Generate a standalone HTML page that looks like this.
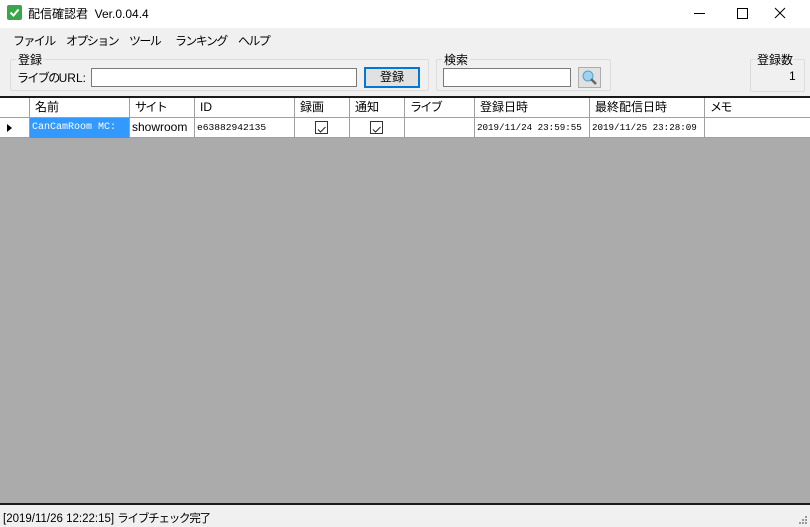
<!DOCTYPE html>
<html><head><meta charset="utf-8"><style>
*{box-sizing:border-box;margin:0;padding:0}
body{width:810px;height:527px;overflow:hidden;background:#f0f0f0;font-family:"Liberation Sans","Noto Sans CJK JP",sans-serif;font-size:12px;color:#000;position:relative}
.a{position:absolute;white-space:nowrap}
.k{letter-spacing:-1.6px}
.grp{position:absolute;border:1px solid #dcdcdc;border-radius:2px}
.lg{position:absolute;background:#f0f0f0;padding:0 2px;top:-9px;left:5px;font-size:12px}
.inp{position:absolute;background:#fff;border:1px solid #7a7a7a}
.c{position:absolute;top:0;height:20px;border-right:1px solid #a0a0a0;line-height:19px;padding-left:5px;white-space:nowrap;overflow:hidden}
.cb{position:absolute;width:13px;height:13px;border:1px solid #333;background:#fff;top:3px}
.m{font-family:"Liberation Mono",monospace;font-size:9.2px}
</style></head><body>
<div class="a" style="left:0;top:0;width:810px;height:28px;background:#fff"></div>
<div class="a" style="left:7px;top:5px;width:15px;height:15px;background:#3aa64a;border-radius:2px"><svg width="15" height="15"><path d="M3.5 7.5 L6.5 10.5 L11.5 4.5" stroke="#fff" stroke-width="2" fill="none"/></svg></div>
<div class="a" style="left:28px;top:5px;font-size:12px">配信確認君&nbsp; Ver.0.04.4</div>
<svg class="a" style="left:690px;top:6px" width="110" height="14"><path d="M4 7.5H15" stroke="#000"/><path d="M47.5 2.5h10v10h-10z" stroke="#000" fill="none"/><path d="M85 2L95 12M95 2L85 12" stroke="#000"/></svg>
<div class="a k" style="left:13px;top:32px">ファイル</div>
<div class="a k" style="left:66px;top:32px">オプション</div>
<div class="a k" style="left:129px;top:32px">ツール</div>
<div class="a k" style="left:175px;top:32px">ランキング</div>
<div class="a k" style="left:238px;top:32px">ヘルプ</div>
<div class="grp" style="left:10px;top:59px;width:419px;height:32px"><span class="lg">登録</span></div>
<div class="a" style="left:17px;top:69px"><span class="k">ライブの</span>URL:</div>
<div class="inp" style="left:91px;top:68px;width:266px;height:19px"></div>
<div class="a" style="left:364px;top:67px;width:56px;height:21px;background:#e1e1e1;border:2px solid #0078d7;text-align:center;line-height:17px">登録</div>
<div class="grp" style="left:436px;top:59px;width:175px;height:32px"><span class="lg">検索</span></div>
<div class="inp" style="left:443px;top:68px;width:128px;height:19px"></div>
<div class="a" style="left:578px;top:67px;width:23px;height:21px;background:#e1e1e1;border:1px solid #adadad"><svg width="21" height="19"><circle cx="9" cy="8" r="5" fill="#9cd3f2" stroke="#5a9fc8"/><path d="M12 11l5 5" stroke="#666" stroke-width="2.5"/></svg></div>
<div class="grp" style="left:750px;top:59px;width:55px;height:33px"></div>
<div class="a" style="left:756px;top:51px;background:#f0f0f0;padding:0 1px">登録数</div>
<div class="a" style="left:789px;top:69px">1</div>
<div class="a" style="left:0;top:96px;width:810px;height:2px;background:#1a1a1a"></div>
<div class="a" style="left:0;top:98px;width:810px;height:40px;background:#fff"></div>
<div class="a" style="left:0;top:98px;width:810px;height:20px;border-bottom:1px solid #a0a0a0">
<div class="c" style="left:0;width:30px"></div>
<div class="c" style="left:30px;width:100px">名前</div>
<div class="c k" style="left:130px;width:65px">サイト</div>
<div class="c" style="left:195px;width:100px">ID</div>
<div class="c" style="left:295px;width:55px">録画</div>
<div class="c" style="left:350px;width:55px">通知</div>
<div class="c k" style="left:405px;width:70px">ライブ</div>
<div class="c" style="left:475px;width:115px">登録日時</div>
<div class="c" style="left:590px;width:115px">最終配信日時</div>
<div class="c k" style="left:705px;width:105px;border-right:none">メモ</div>
</div>
<div class="a" style="left:0;top:118px;width:810px;height:20px;border-bottom:1px solid #a0a0a0">
<div class="c" style="left:0;width:30px"><svg width="10" height="19"><path d="M2 6l5 4-5 4z" fill="#000"/></svg></div>
<div class="c" style="left:30px;width:100px;background:#3399ff;color:#fff;padding-left:2px;font-family:'Liberation Mono',monospace;font-size:10px">CanCamRoom MC:</div>
<div class="c" style="left:130px;width:65px;font-size:12px;padding-left:2px">showroom</div>
<div class="c" style="left:195px;width:100px;padding-left:2px;font-family:'Liberation Mono',monospace;font-size:9.6px">e63882942135</div>
<div class="c" style="left:295px;width:55px"><div class="cb" style="left:20px"><svg width="11" height="11"><path d="M2 5.5l2.5 2.5 5-5" stroke="#222" fill="none"/></svg></div></div>
<div class="c" style="left:350px;width:55px"><div class="cb" style="left:20px"><svg width="11" height="11"><path d="M2 5.5l2.5 2.5 5-5" stroke="#222" fill="none"/></svg></div></div>
<div class="c" style="left:405px;width:70px"></div>
<div class="c m" style="left:475px;width:115px;padding-left:2px">2019/11/24 23:59:55</div>
<div class="c m" style="left:590px;width:115px;padding-left:2px">2019/11/25 23:28:09</div>
<div class="c" style="left:705px;width:105px;border-right:none"></div>
</div>
<div class="a" style="left:0;top:138px;width:810px;height:365px;background:#ababab"></div>
<div class="a" style="left:0;top:503px;width:810px;height:2px;background:#1a1a1a"></div>
<div class="a" style="left:3px;top:510px;font-size:11.5px">[2019/11/26 12:22:15] <span style="letter-spacing:-1.2px">ライブチェック完了</span></div>
<svg class="a" style="left:798px;top:515px" width="12" height="12"><g fill="#999"><rect x="7" y="1" width="2" height="2"/><rect x="4" y="4" width="2" height="2"/><rect x="7" y="4" width="2" height="2"/><rect x="1" y="7" width="2" height="2"/><rect x="4" y="7" width="2" height="2"/><rect x="7" y="7" width="2" height="2"/></g></svg>
</body></html>
